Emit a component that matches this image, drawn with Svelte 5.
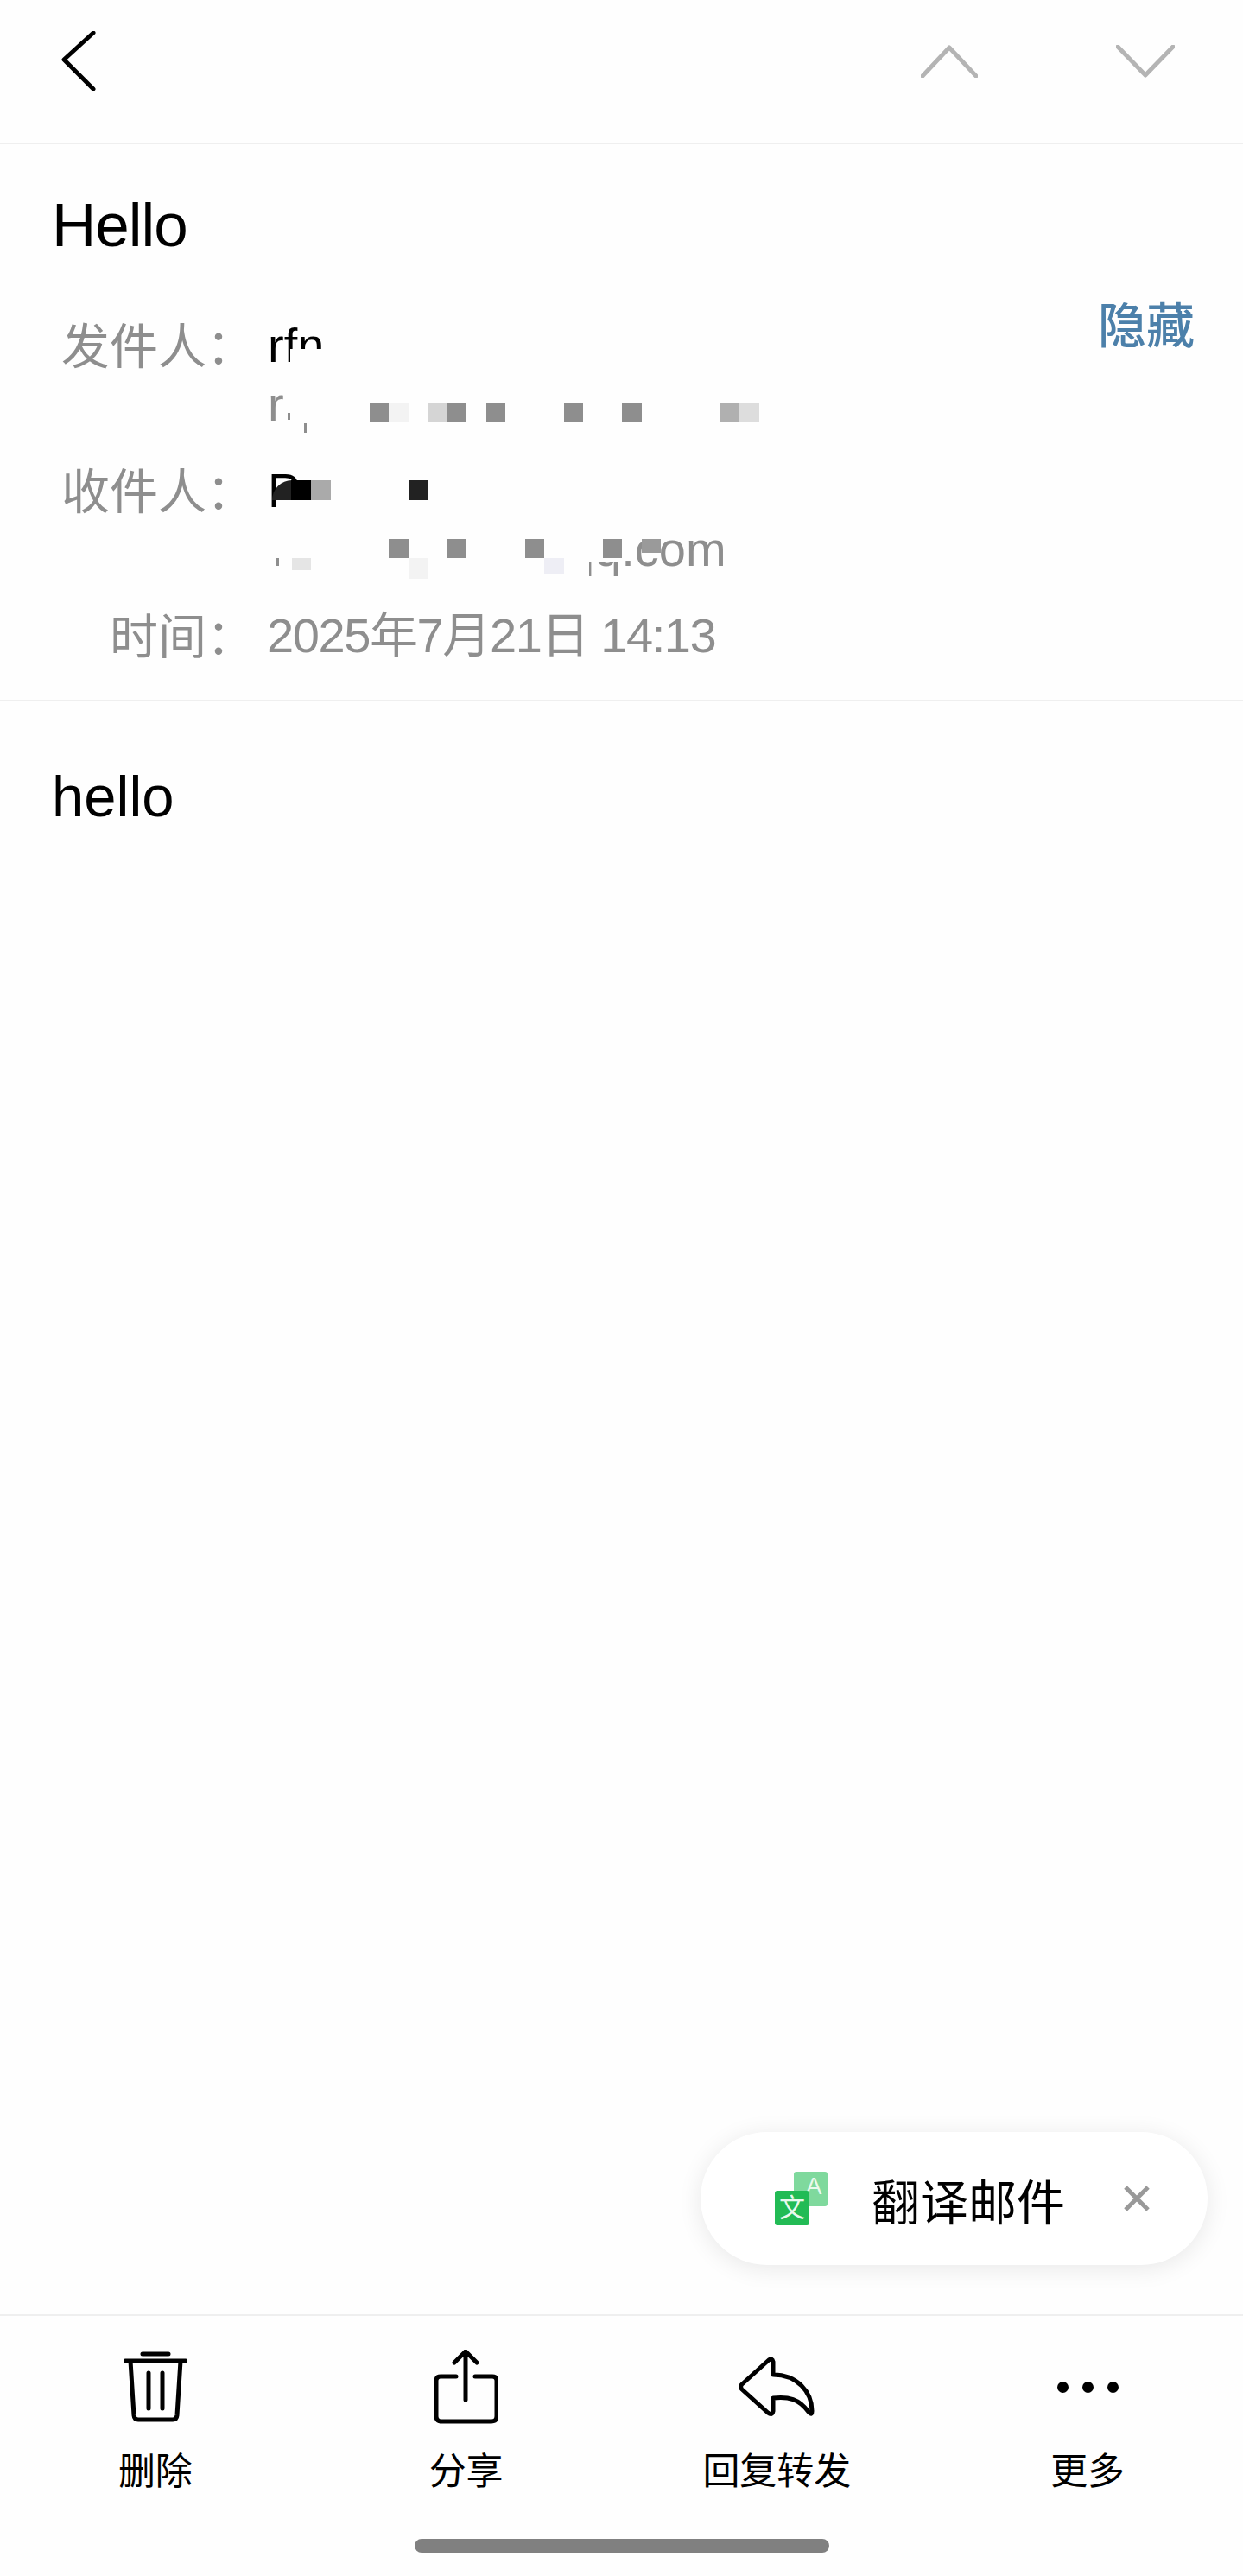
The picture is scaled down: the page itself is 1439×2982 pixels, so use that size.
<script>
  const paper = "#fefefe";
  const grey = "#8e8e8e";

  // redaction tiles of the screenshot, x/y are px inside each address block
  const senderTiles = [
    { x: 26, y: 38, w: 60, h: 40, c: paper },
    { x: 23, y: 112, w: 3, h: 8, c: grey },
    { x: 42, y: 124, w: 3, h: 11, c: grey },
    { x: 118, y: 101, w: 23, h: 22, c: grey },
    { x: 140, y: 101, w: 23, h: 22, c: "#f3f3f3" },
    { x: 185, y: 101, w: 23, h: 22, c: "#d5d5d5" },
    { x: 208, y: 101, w: 22, h: 22, c: grey },
    { x: 253, y: 101, w: 22, h: 22, c: grey },
    { x: 343, y: 101, w: 22, h: 22, c: grey },
    { x: 410, y: 101, w: 23, h: 22, c: grey },
    { x: 523, y: 101, w: 22, h: 22, c: "#b0b0b0" },
    { x: 545, y: 101, w: 24, h: 22, c: "#ddd" }
  ];

  const recipientTiles = [
    { x: 330, y: 68, w: 42, h: 66, c: paper },
    { x: 372, y: 68, w: 40, h: 48, c: paper },
    { x: 5, y: 22, w: 23, h: 23, c: "#222", r: 23 },
    { x: 27, y: 22, w: 23, h: 23, c: "#000" },
    { x: 50, y: 22, w: 23, h: 23, c: "#aaa" },
    { x: 163, y: 22, w: 22, h: 23, c: "#222" },
    { x: 140, y: 90, w: 23, h: 22, c: grey },
    { x: 208, y: 90, w: 22, h: 22, c: grey },
    { x: 298, y: 90, w: 22, h: 22, c: grey },
    { x: 388, y: 90, w: 22, h: 22, c: grey },
    { x: 433, y: 90, w: 22, h: 16, c: "#9a9a9a" },
    { x: 10, y: 112, w: 3, h: 9, c: grey },
    { x: 28, y: 112, w: 22, h: 14, c: "#e5e5e5" },
    { x: 163, y: 112, w: 23, h: 24, c: "#f3f3f3" },
    { x: 320, y: 112, w: 23, h: 19, c: "#eeeef5" }
  ];

  const actions = [
    { key: "trash", label: "删除" },
    { key: "share", label: "分享" },
    { key: "reply", label: "回复转发" },
    { key: "more", label: "更多" }
  ];
</script>

<div class="page">
  <header class="topbar">
    <svg class="back" width="40" height="69" viewBox="0 0 40 69">
      <path d="M37 2 L3 33 L37 67" />
    </svg>
    <div class="nav">
      <svg width="66" height="38" viewBox="0 0 66 38"><path d="M2 36 L33 3 L64 36" /></svg>
      <svg width="68" height="38" viewBox="0 0 68 38"><path d="M2 2 L34 35 L66 2" /></svg>
    </div>
  </header>

  <section class="meta">
    <h1>Hello</h1>
    <div class="rows">
      <div class="label">发件人：</div>
      <div class="addr">
        <div class="name">rfn</div>
        <div class="mail">r</div>
        {#each senderTiles as t}
          <i class="tile" style="left:{t.x}px;top:{t.y}px;width:{t.w}px;height:{t.h}px;background:{t.c}"></i>
        {/each}
      </div>
      <div class="hide">隐藏</div>

      <div class="label">收件人：</div>
      <div class="addr">
        <div class="name">P</div>
        <div class="mail domain">qq.com</div>
        {#each recipientTiles as t}
          <i class="tile" style="left:{t.x}px;top:{t.y}px;width:{t.w}px;height:{t.h}px;background:{t.c};border-top-left-radius:{t.r || 0}px"></i>
        {/each}
      </div>
      <div></div>

      <div class="label">时间：</div>
      <div class="time">2025年7月21日 14:13</div>
      <div></div>
    </div>
  </section>

  <main class="content">
    <p>hello</p>
    <div class="toast">
      <svg class="translate" width="62" height="62" viewBox="0 0 62 62">
        <rect x="22" y="0" width="39" height="40" rx="3" fill="#7fd99d" />
        <text x="45" y="26" class="a">A</text>
        <rect x="0" y="22" width="40" height="40" rx="3" fill="#22bb55" />
        <text x="20" y="52" class="wen">文</text>
      </svg>
      <span>翻译邮件</span>
      <svg class="close" width="30" height="30" viewBox="0 0 30 30">
        <path d="M2 2 L28 28 M28 2 L2 28" />
      </svg>
    </div>
  </main>

  <footer class="actions">
    {#each actions as a}
      <div class="action">
        <div class="icon">
          {#if a.key === "trash"}
            <svg width="72" height="82" viewBox="0 0 72 82">
              <path d="M21 3 H51 M1 11 H71 M7 11 L11 74 Q11.500 79 16 79 H56 Q60.500 79 61 74 L65 11 M28 25 V66 M44 25 V66" />
            </svg>
          {:else if a.key === "share"}
            <svg width="74" height="86" viewBox="0 0 74 86">
              <path d="M25 31 H7 Q2 31 2 36 V77 Q2 83 8 83 H66 Q72 83 72 77 V36 Q72 31 67 31 H47 M36 58 V3 M23 15 L36 2 L49 15" />
            </svg>
          {:else if a.key === "reply"}
            <svg width="88" height="72" viewBox="0 0 88 72">
              <path d="M35 5 Q39 2 40 7 V22 C68 22 85 42 85 64 Q85 70 81 65 C70 50 58 47 40 49 V64 Q39 70 34 66 L4 39 Q1 36 4 33 Z" />
            </svg>
          {:else}
            <div class="dots"><b></b><b></b><b></b></div>
          {/if}
        </div>
        <span>{a.label}</span>
      </div>
    {/each}
  </footer>

  <div class="homebar"><div></div></div>
</div>

<style>
  :global(body) {
    background: #fff;
  }

  .page {
    height: 2982px;
    display: flex;
    flex-direction: column;
    background: #fefefe;
    color: #000;
    font-family: "Liberation Sans", "Noto Sans CJK SC", sans-serif;
    overflow: hidden;
  }

  svg path {
    fill: none;
    stroke: currentColor;
    stroke-linecap: round;
    stroke-linejoin: round;
  }

  .topbar {
    height: 167px;
    box-sizing: border-box;
    border-bottom: 2px solid #efefef;
    padding: 0 79px 24px 71px;
    display: flex;
    align-items: center;
    justify-content: space-between;
  }

  .back path {
    stroke-width: 5;
  }

  .nav {
    display: flex;
    gap: 160px;
    color: #b4b4b4;
  }

  .nav path {
    stroke-width: 5;
  }

  .meta {
    padding: 52px 56px 0 60px;
    height: 645px;
    box-sizing: border-box;
    border-bottom: 2px solid #efefef;
  }

  h1 {
    margin: 0;
    font-size: 71px;
    font-weight: 400;
    line-height: 84px;
    letter-spacing: -1px;
  }

  .rows {
    margin-top: 63px;
    margin-left: -60px;
    display: grid;
    grid-template-columns: 270px 40px 1fr auto;
    row-gap: 32px;
    font-size: 56px;
    line-height: 68px;
    color: #8e8e8e;
  }

  .label {
    grid-column: 1;
    text-align: right;
    white-space: nowrap;
    margin-right: -25px;
    padding-top: 2px;
  }

  .addr,
  .time {
    grid-column: 3;
    position: relative;
    white-space: nowrap;
  }

  .time {
    letter-spacing: -1.4px;
    margin-left: -1px;
  }

  .hide {
    grid-column: 4;
    color: #4c80aa;
    font-size: 56px;
    font-weight: 500;
    line-height: 60px;
    margin-top: -18px;
  }

  .name {
    color: #000;
  }

  .domain {
    padding-left: 347px;
  }

  .tile {
    position: absolute;
    display: block;
  }

  .content {
    flex: 1;
    position: relative;
    padding: 70px 60px 0;
  }

  .content p {
    margin: 0;
    font-size: 67px;
    line-height: 80px;
  }

  .toast {
    position: absolute;
    left: 811px;
    bottom: 57px;
    width: 587px;
    height: 154px;
    border-radius: 77px;
    background: #fff;
    box-shadow: 0 4px 28px rgba(0, 0, 0, 0.09);
    display: flex;
    align-items: center;
    box-sizing: border-box;
    padding-left: 86px;
    font-size: 56px;
  }

  .toast span {
    margin-left: 50px;
    white-space: nowrap;
  }

  .translate text {
    fill: #e9f9ee;
    text-anchor: middle;
  }

  .a {
    font-size: 28px;
  }

  .wen {
    font-size: 30px;
  }

  .close {
    margin-left: 68px;
    color: #999;
  }

  .close path {
    stroke-width: 5;
    stroke-linecap: butt;
  }

  .actions {
    height: 260px;
    box-sizing: border-box;
    border-top: 2px solid #efefef;
    display: grid;
    grid-template-columns: repeat(4, 1fr);
  }

  .action {
    display: flex;
    flex-direction: column;
    align-items: center;
    font-size: 43px;
    line-height: 52px;
  }

  .icon {
    margin-top: 10px;
    height: 144px;
    display: flex;
    align-items: center;
  }

  .icon path {
    stroke-width: 5;
  }

  .dots {
    display: flex;
    gap: 16px;
  }

  .dots b {
    width: 13px;
    height: 13px;
    border-radius: 50%;
    background: #000;
  }

  .homebar {
    height: 43px;
    display: flex;
    justify-content: center;
  }

  .homebar div {
    width: 480px;
    height: 16px;
    border-radius: 8px;
    background: #808080;
  }
</style>
